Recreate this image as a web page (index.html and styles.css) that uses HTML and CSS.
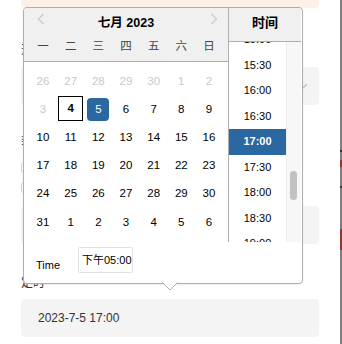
FILE: index.html
```html
<!DOCTYPE html>
<html lang="zh">
<head>
<meta charset="utf-8">
<title>Datepicker</title>
<link rel="stylesheet" href="styles.css">
</head>
<body>
<div class="screen">
  <div class="page">
    <div class="alert"></div>
    <div class="field-label l1">开</div>
    <div class="box box-select">
      <svg class="select-arrow" width="12" height="7" viewBox="0 0 12 7"><path d="M1 1 L6 6 L11 1" fill="none" stroke="#bdbdbd" stroke-width="1.2"/></svg>
    </div>
    <div class="field-label l2">类</div>
    <div class="check c1"></div>
    <div class="check c2"></div>
    <div class="box b2"></div>
    <div class="field-label l3">定时</div>
    <div class="box box-text">2023-7-5 17:00</div>

    <div class="popup">
      <div class="dp-main">
        <div class="cal">
          <div class="cal-head">
            <div class="cal-title-row">
              <svg class="nav nav-prev" width="8" height="12" viewBox="0 0 8 12"><path d="M6.5 1 L1.5 6 L6.5 11" fill="none" stroke="#cfcfcf" stroke-width="1.6"/></svg>
              <div class="cal-title">七月 2023</div>
              <svg class="nav nav-next" width="8" height="12" viewBox="0 0 8 12"><path d="M1.5 1 L6.5 6 L1.5 11" fill="none" stroke="#cfcfcf" stroke-width="1.6"/></svg>
            </div>
            <div class="week">
              <span>一</span><span>二</span><span>三</span><span>四</span><span>五</span><span>六</span><span>日</span>
            </div>
          </div>
          <div class="days">
            <span class="d off">26</span><span class="d off">27</span><span class="d off">28</span><span class="d off">29</span><span class="d off">30</span><span class="d off">1</span><span class="d off">2</span>
            <span class="d off">3</span><span class="d today">4</span><span class="d sel">5</span><span class="d">6</span><span class="d">7</span><span class="d">8</span><span class="d">9</span>
            <span class="d">10</span><span class="d">11</span><span class="d">12</span><span class="d">13</span><span class="d">14</span><span class="d">15</span><span class="d">16</span>
            <span class="d">17</span><span class="d">18</span><span class="d">19</span><span class="d">20</span><span class="d">21</span><span class="d">22</span><span class="d">23</span>
            <span class="d">24</span><span class="d">25</span><span class="d">26</span><span class="d">27</span><span class="d">28</span><span class="d">29</span><span class="d">30</span>
            <span class="d">31</span><span class="d">1</span><span class="d">2</span><span class="d">3</span><span class="d">4</span><span class="d">5</span><span class="d">6</span>
          </div>
        </div>
        <div class="time">
          <div class="time-head">时间</div>
          <div class="time-body">
            <div class="time-list">
              <div class="t first">15:00</div>
              <div class="t">15:30</div>
              <div class="t">16:00</div>
              <div class="t">16:30</div>
              <div class="t tsel">17:00</div>
              <div class="t">17:30</div>
              <div class="t">18:00</div>
              <div class="t">18:30</div>
              <div class="t">19:00</div>
            </div>
            <div class="track"><div class="thumb"></div></div>
          </div>
        </div>
      </div>
      <div class="dp-foot">
        <div class="foot-label">Time</div>
        <div class="foot-input">下午05:00</div>
      </div>
      <svg class="tri" width="16" height="9" viewBox="0 0 16 9"><path d="M0 0 L16 0 L8 8 Z" fill="#fff"/><path d="M0.5 0.5 L8 8 L15.5 0.5" fill="none" stroke="#aeaeae" stroke-width="1"/></svg>
    </div>
  </div>
  <div class="edge">
    <div class="seg tick1"></div>
    <div class="seg red1"></div>
    <div class="seg tick2"></div>
    <div class="seg red2"></div>
  </div>
</div>
</body>
</html>
```
FILE: styles.css
```css
html, body {
  margin: 0;
  padding: 0;
  background: #fff;
}
body {
  font-family: "Liberation Sans", "Noto Sans CJK SC", sans-serif;
  color: #000;
}
.screen {
  width: 342px;
  height: 344px;
  display: flex;
  overflow: hidden;
}
.page {
  position: relative;
  width: 340px;
  height: 344px;
  padding: 0 21px;
  box-sizing: border-box;
  display: flex;
  flex-direction: column;
}
.alert {
  height: 8px;
  background: #fdf0e6;
  border-radius: 0 0 4px 4px;
}
.field-label {
  font-size: 12px;
  line-height: 16px;
  height: 16px;
  color: #333;
}
.l1 { margin-top: 34px; }
.l2 { margin-top: 27px; }
.l3 { margin-top: 31px; }
.box {
  height: 38px;
  background: #f4f4f4;
  border-radius: 4px;
  position: relative;
  flex-shrink: 0;
}
.box-select {
  margin-top: 9px;
  display: flex;
  align-items: center;
  justify-content: flex-end;
  padding-right: 11px;
}
.select-arrow { display: block; }
.check {
  width: 12px;
  height: 11px;
  border: 1px solid #d0d0d0;
  border-radius: 3px;
  box-sizing: border-box;
}
.c1 { margin-top: 14px; }
.c2 { margin-top: 9px; }
.b2 { margin-top: 13px; }
.box-text {
  margin-top: 8px;
  font-size: 12px;
  line-height: 38px;
  padding-left: 17px;
  color: #333;
}

/* popup */
.popup {
  position: absolute;
  left: 23px;
  top: 7px;
  width: 280px;
  height: 277px;
  box-sizing: border-box;
  border: 1px solid #aeaeae;
  border-radius: 4px;
  background: #fff;
  box-shadow: 0 1px 2px rgba(0,0,0,0.08);
  z-index: 5;
}
.dp-main {
  display: flex;
  height: 234px;
}
.cal {
  width: 204px;
  flex-shrink: 0;
}
.cal-head {
  background: #f0f0f0;
  border-bottom: 1px solid #aeaeae;
  border-top-left-radius: 3px;
  padding: 8px 0 7px 0;
}
.cal-title-row {
  position: relative;
  height: 14px;
  display: flex;
  justify-content: center;
}
.cal-title {
  font-size: 12.5px;
  font-weight: bold;
  line-height: 14px;
}
.nav {
  position: absolute;
  top: -3px;
}
.nav-prev { left: 13px; }
.nav-next { left: 186px; }
.week {
  margin-top: 8px;
  display: grid;
  grid-template-columns: repeat(7, 27.67px);
  padding-left: 5.2px;
  font-size: 11.5px;
  line-height: 16px;
  color: #444;
  text-align: center;
}
.days {
  display: grid;
  grid-template-columns: repeat(7, 27.67px);
  grid-auto-rows: 28.2px;
  padding: 5px 0 0 5.2px;
  font-size: 11.5px;
  text-align: center;
  align-items: center;
  justify-items: center;
}
.d {
  display: block;
  width: 22px;
  height: 23px;
  line-height: 23px;
  color: #000;
}
.d.off { color: #c8c8c8; }
.d.today {
  width: 25px;
  height: 25px;
  line-height: 23px;
  box-sizing: border-box;
  border: 1px solid #000;
  font-weight: bold;
  margin-top: -1px;
}
.d.sel {
  background: #2b67a0;
  color: #fff;
  border-radius: 4px;
}

.time {
  width: 73px;
  border-left: 1px solid #aeaeae;
  box-sizing: border-box;
  display: flex;
  flex-direction: column;
}
.time-head {
  background: #f0f0f0;
  border-bottom: 1px solid #aeaeae;
  border-top-right-radius: 3px;
  font-size: 13px;
  font-weight: bold;
  line-height: 16px;
  padding: 7px 0 10px 0;
  text-align: center;
}
.time-body {
  display: flex;
  height: 200px;
  overflow: hidden;
}
.time-list {
  width: 57px;
  overflow: hidden;
}
.t {
  height: 25.5px;
  line-height: 25.5px;
  font-size: 11px;
  text-align: center;
  color: #000;
}
.t.first { margin-top: -14.75px; }
.t.tsel {
  background: #2b67a0;
  color: #fff;
  font-weight: bold;
}
.track {
  width: 15px;
  background: #f7f7f7;
  border-left: 1px solid #ededed;
  box-sizing: border-box;
  padding-top: 129px;
}
.thumb {
  width: 7px;
  height: 29px;
  margin-left: 3px;
  background: #c1c1c1;
  border-radius: 4px;
}

.dp-foot {
  display: flex;
  align-items: flex-start;
  padding-left: 12px;
  height: 41px;
}
.foot-label {
  font-size: 11px;
  line-height: 14px;
  margin-top: 16px;
  width: 42px;
}
.foot-input {
  margin-top: 5px;
  width: 55px;
  height: 26px;
  box-sizing: border-box;
  border: 1px solid #e2e2e2;
  border-radius: 2px;
  font-size: 11px;
  line-height: 24px;
  padding-left: 3px;
  white-space: nowrap;
}
.tri {
  position: absolute;
  left: 138px;
  top: 274px;
  display: block;
}

/* right edge strip */
.edge {
  width: 2px;
  height: 344px;
  background: #7e7e7e;
  position: relative;
}
.seg {
  position: absolute;
  left: 0;
  width: 2px;
}
.tick1 { top: 150px; height: 2px; background: #333; }
.red1 { top: 160px; height: 7px; background: #8e3a2f; }
.tick2 { top: 186px; height: 2px; background: #333; }
.red2 { top: 229px; height: 21px; background: #8e3a2f; }
```
